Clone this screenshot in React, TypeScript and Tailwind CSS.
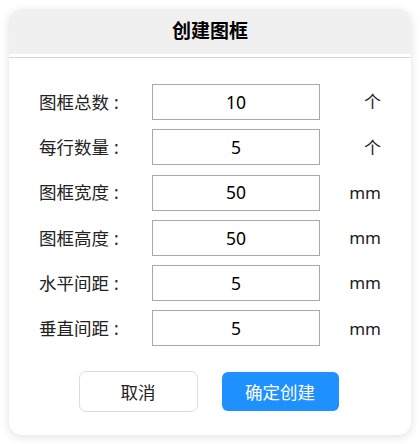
const ROWS = [
  { label: "图框总数", value: "10", unit: "个" },
  { label: "每行数量", value: "5", unit: "个" },
  { label: "图框宽度", value: "50", unit: "mm" },
  { label: "图框高度", value: "50", unit: "mm" },
  { label: "水平间距", value: "5", unit: "mm" },
  { label: "垂直间距", value: "5", unit: "mm" },
];

const FONT = "font-['Noto_Sans','Noto_Sans_CJK_SC',sans-serif]";

export default function App() {
  return (
    <div className={`h-[444px] w-[420px] bg-white p-[9px] ${FONT}`}>
      <div className="flex h-[426px] w-[402px] flex-col overflow-hidden rounded-[13px] bg-white shadow-[0_2px_10px_rgba(0,0,0,0.12)]">
        <div className="flex h-[45px] shrink-0 items-center justify-center bg-[#f0f0f0]">
          <span className="text-[19px] font-bold text-black">创建图框</span>
        </div>
        <div className="h-[3px] shrink-0 bg-white" />
        <div className="h-px shrink-0 bg-[#d6d6d6]" />
        <div className="flex flex-col gap-[9.3px] pl-[30px] pr-[30px] pt-[26px]">
          {ROWS.map((row) => (
            <div key={row.label} className="flex h-[36px] items-center">
              <span className="w-[113px] shrink-0 text-[17.5px] text-[#222]">
                {row.label}
                <span className="ml-[5px]">:</span>
              </span>
              <div className="flex h-[36px] w-[168px] shrink-0 items-center justify-center border border-[#a8a8a8] text-[17.5px] text-black">
                {row.value}
              </div>
              <span className="flex-1 text-right text-[17px] text-[#222]">
                {row.unit}
              </span>
            </div>
          ))}
        </div>
        <div className="mt-[25px] flex justify-center gap-[24px] pr-[3px]">
          <button className="h-[41px] w-[119px] rounded-[7px] border border-[#dcdcdc] bg-white text-[17.5px] text-[#222]">
            取消
          </button>
          <button className="mt-px h-[39px] w-[117px] rounded-[6px] bg-[#1e90ff] text-[17.5px] text-white">
            确定创建
          </button>
        </div>
      </div>
    </div>
  );
}
